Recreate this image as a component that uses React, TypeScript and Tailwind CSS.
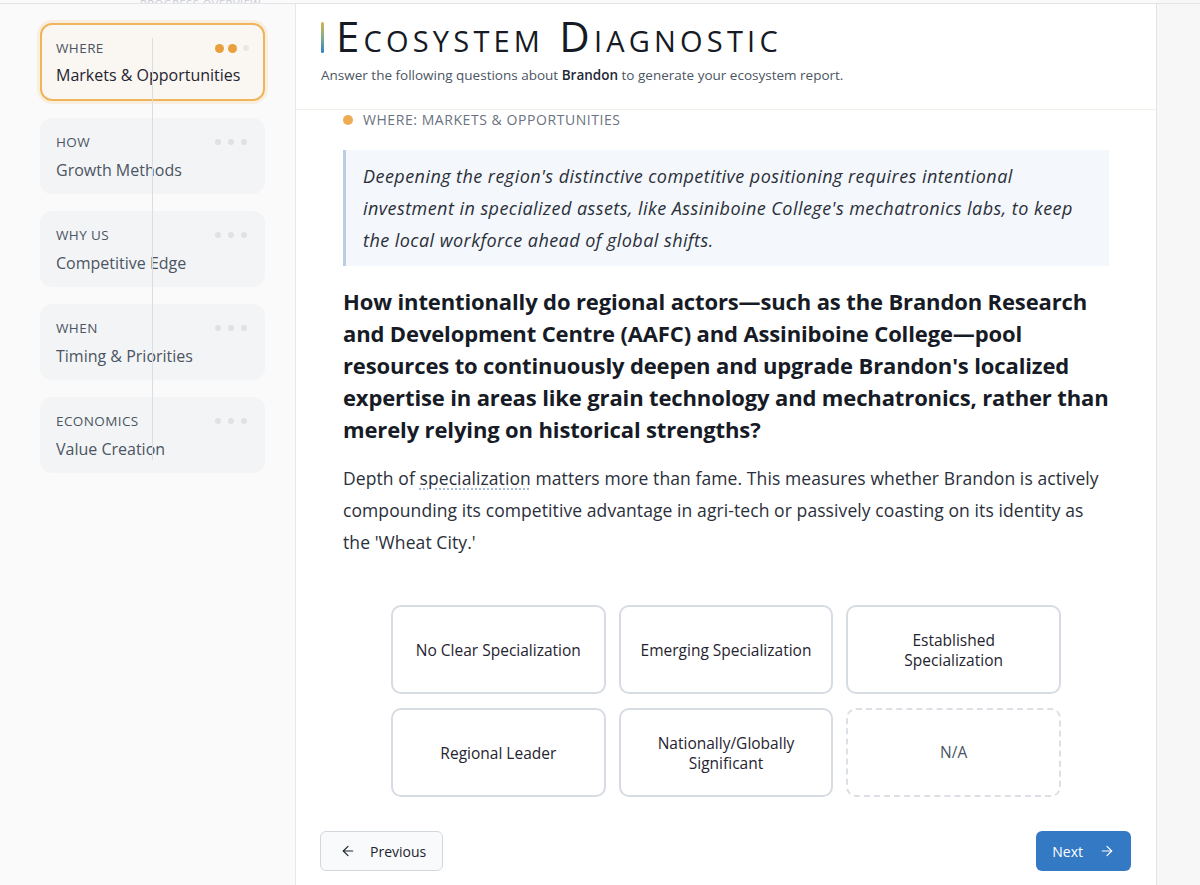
import React from 'react';
import { ArrowLeft, ArrowRight } from 'lucide-react';

interface Step {
  tag: string;
  title: string;
  progress: number;
}

const steps: Step[] = [
  { tag: 'Where', title: 'Markets & Opportunities', progress: 2 },
  { tag: 'How', title: 'Growth Methods', progress: 0 },
  { tag: 'Why Us', title: 'Competitive Edge', progress: 0 },
  { tag: 'When', title: 'Timing & Priorities', progress: 0 },
  { tag: 'Economics', title: 'Value Creation', progress: 0 },
];

const options = [
  'No Clear Specialization',
  'Emerging Specialization',
  'Established Specialization',
  'Regional Leader',
  'Nationally/Globally Significant',
];

const font = { fontFamily: '"Open Sans", "Liberation Sans", sans-serif' };

const StepCard = ({ step, active }: { step: Step; active: boolean }) => {
  if (active) {
    return (
      <div className="relative h-[78px] rounded-xl border-2 border-[#f0b45a] bg-[#faf6f1] px-[14px] pt-[13px] shadow-[0_0_0_3px_rgba(240,180,90,0.15)]">
        <div className="flex items-center justify-between">
          <span className="text-[13.5px] uppercase tracking-[0.03em] text-[#4b5563]">{step.tag}</span>
          <div className="flex items-center gap-[4px]">
            <span className="h-[9px] w-[9px] rounded-full bg-[#e8a03c]" />
            <span className="h-[9px] w-[9px] rounded-full bg-[#e8a03c]" />
            <span className="ml-[2px] h-[6px] w-[6px] rounded-full bg-[#ece7e2]" />
          </div>
        </div>
        <div className="mt-[5px] text-[16px] text-[#1f2430]">{step.title}</div>
      </div>
    );
  }
  return (
    <div className="h-[76px] rounded-xl bg-[#f3f4f6] px-[16px] pt-[14px]">
      <div className="flex items-center justify-between">
        <span className="text-[13.5px] uppercase tracking-[0.03em] text-[#4b5563]">{step.tag}</span>
        <div className="mr-[2px] flex items-center gap-[7px]">
          <span className="h-[6px] w-[6px] rounded-full bg-[#dfe1e5]" />
          <span className="h-[6px] w-[6px] rounded-full bg-[#dfe1e5]" />
          <span className="h-[6px] w-[6px] rounded-full bg-[#dfe1e5]" />
        </div>
      </div>
      <div className="mt-[6px] text-[16px] text-[#4b5563]">{step.title}</div>
    </div>
  );
};

const App = () => {
  return (
    <div className="flex h-[885px] w-[1200px] flex-col overflow-hidden bg-[#f7f7f8]" style={font}>
      <div className="flex h-[4px] shrink-0 border-b border-[#e3e4e8]">
        <div className="relative w-[296px] overflow-hidden bg-[#fafafa]">
          <span className="absolute bottom-[-9px] left-[140px] text-[11px] tracking-wider text-[#c9ccd3]">PROGRESS OVERVIEW</span>
        </div>
        <div className="w-[861px] bg-[#fafafa]" />
      </div>

      <div className="flex min-h-0 flex-1">
        {/* sidebar with section steps */}
        <aside className="w-[296px] shrink-0 border-r border-[#e5e7eb] bg-[#fafafa] pl-[40px] pr-[30px] pt-[19px]">
          <div className="relative flex flex-col gap-[17px]">
            {steps.map((s, i) => (
              <StepCard key={s.tag} step={s} active={i === 0} />
            ))}
            <div className="pointer-events-none absolute left-[112px] top-[15px] h-[422px] w-px bg-[#dcdde1]" />
          </div>
        </aside>

        <main className="flex w-[861px] shrink-0 flex-col border-r border-[#e3e4e8] bg-white">
          <header className="h-[106px] shrink-0 border-b border-[#f4efe6] pl-[25px] pt-[8px]">
            <div className="flex items-center">
              <span className="mr-[12px] mt-[2px] h-[31px] w-[3px] rounded-full bg-gradient-to-b from-[#d6b24a] via-[#7fae8a] to-[#2f7fc8]" />
              <h1 className="text-[42px] font-normal leading-[48px] tracking-[0.1em] text-[#151a24] [font-variant:small-caps]">
                Ecosystem Diagnostic
              </h1>
            </div>
            <p className="mt-[5px] text-[13.5px] text-[#4b5563]">
              Answer the following questions about <span className="font-semibold text-[#1f2937]">Brandon</span> to generate your ecosystem report.
            </p>
          </header>

          <section className="flex flex-1 flex-col px-[47px]">
            <div className="flex items-center gap-[10px]">
              <span className="h-[10px] w-[10px] rounded-full bg-[#eeac52]" />
              <span className="text-[14px] leading-[20px] uppercase tracking-[0.04em] text-[#6b7280]">Where: Markets &amp; Opportunities</span>
            </div>

            <blockquote className="mt-[20px] border-l-[3px] border-[#bccde3] bg-[#f4f7fb] py-[10px] pl-[17px] pr-[20px] text-[18px] italic leading-[32px] tracking-[0.025em] text-[#2a2f3a]">
              Deepening the region's distinctive competitive positioning requires intentional investment in specialized assets, like Assiniboine College's mechatronics labs, to keep the local workforce ahead of global shifts.
            </blockquote>

            <h2 className="mt-[19px] text-[22px] font-bold leading-[32px] tracking-[-0.006em] text-[#161b26]">
              How intentionally do regional actors—such as the Brandon Research and Development Centre (AAFC) and Assiniboine College—pool resources to continuously deepen and upgrade Brandon's localized expertise in areas like grain technology and mechatronics, rather than merely relying on historical strengths?
            </h2>

            <p className="mt-[17px] text-[17.5px] leading-[32px] tracking-[0.005em] text-[#2a2f3a]">
              Depth of{' '}
              <span className="underline decoration-[#9bb5d6] decoration-dotted underline-offset-4">specialization</span>{' '}
              matters more than fame. This measures whether Brandon is actively compounding its competitive advantage in agri-tech or passively coasting on its identity as the 'Wheat City.'
            </p>

            <div className="mx-auto mt-[47px] grid w-[670px] grid-cols-3 gap-x-[13px] gap-y-[14px]">
              {options.map((o) => (
                <button
                  key={o}
                  className="flex h-[89px] items-center justify-center rounded-[10px] border-2 border-[#d7dce3] bg-white px-[14px] text-center text-[15.5px] leading-[20px] text-[#1f2430]"
                >
                  {o}
                </button>
              ))}
              <button className="flex h-[89px] items-center justify-center rounded-[10px] border-2 border-dashed border-[#dcdfe4] bg-white text-[15.5px] text-[#4b5563]">
                N/A
              </button>
            </div>

            <div className="-mx-[23px] mt-[34px] flex items-center justify-between">
              <button className="flex h-[40px] items-center gap-[14px] rounded-md border border-[#d3d8df] bg-[#f9fafb] pl-[19px] pr-[16px] text-[14px] text-[#1f2430]">
                <ArrowLeft className="h-4 w-4" strokeWidth={1.75} />
                Previous
              </button>
              <button className="mr-[1px] flex h-[40px] items-center gap-[16px] rounded-md bg-[#3479c4] pl-[16px] pr-[16px] text-[14px] text-white">
                Next
                <ArrowRight className="h-4 w-4" strokeWidth={1.75} />
              </button>
            </div>
          </section>
        </main>

        <div className="flex-1 bg-[#f7f7f8]" />
      </div>
    </div>
  );
};

export default App;
